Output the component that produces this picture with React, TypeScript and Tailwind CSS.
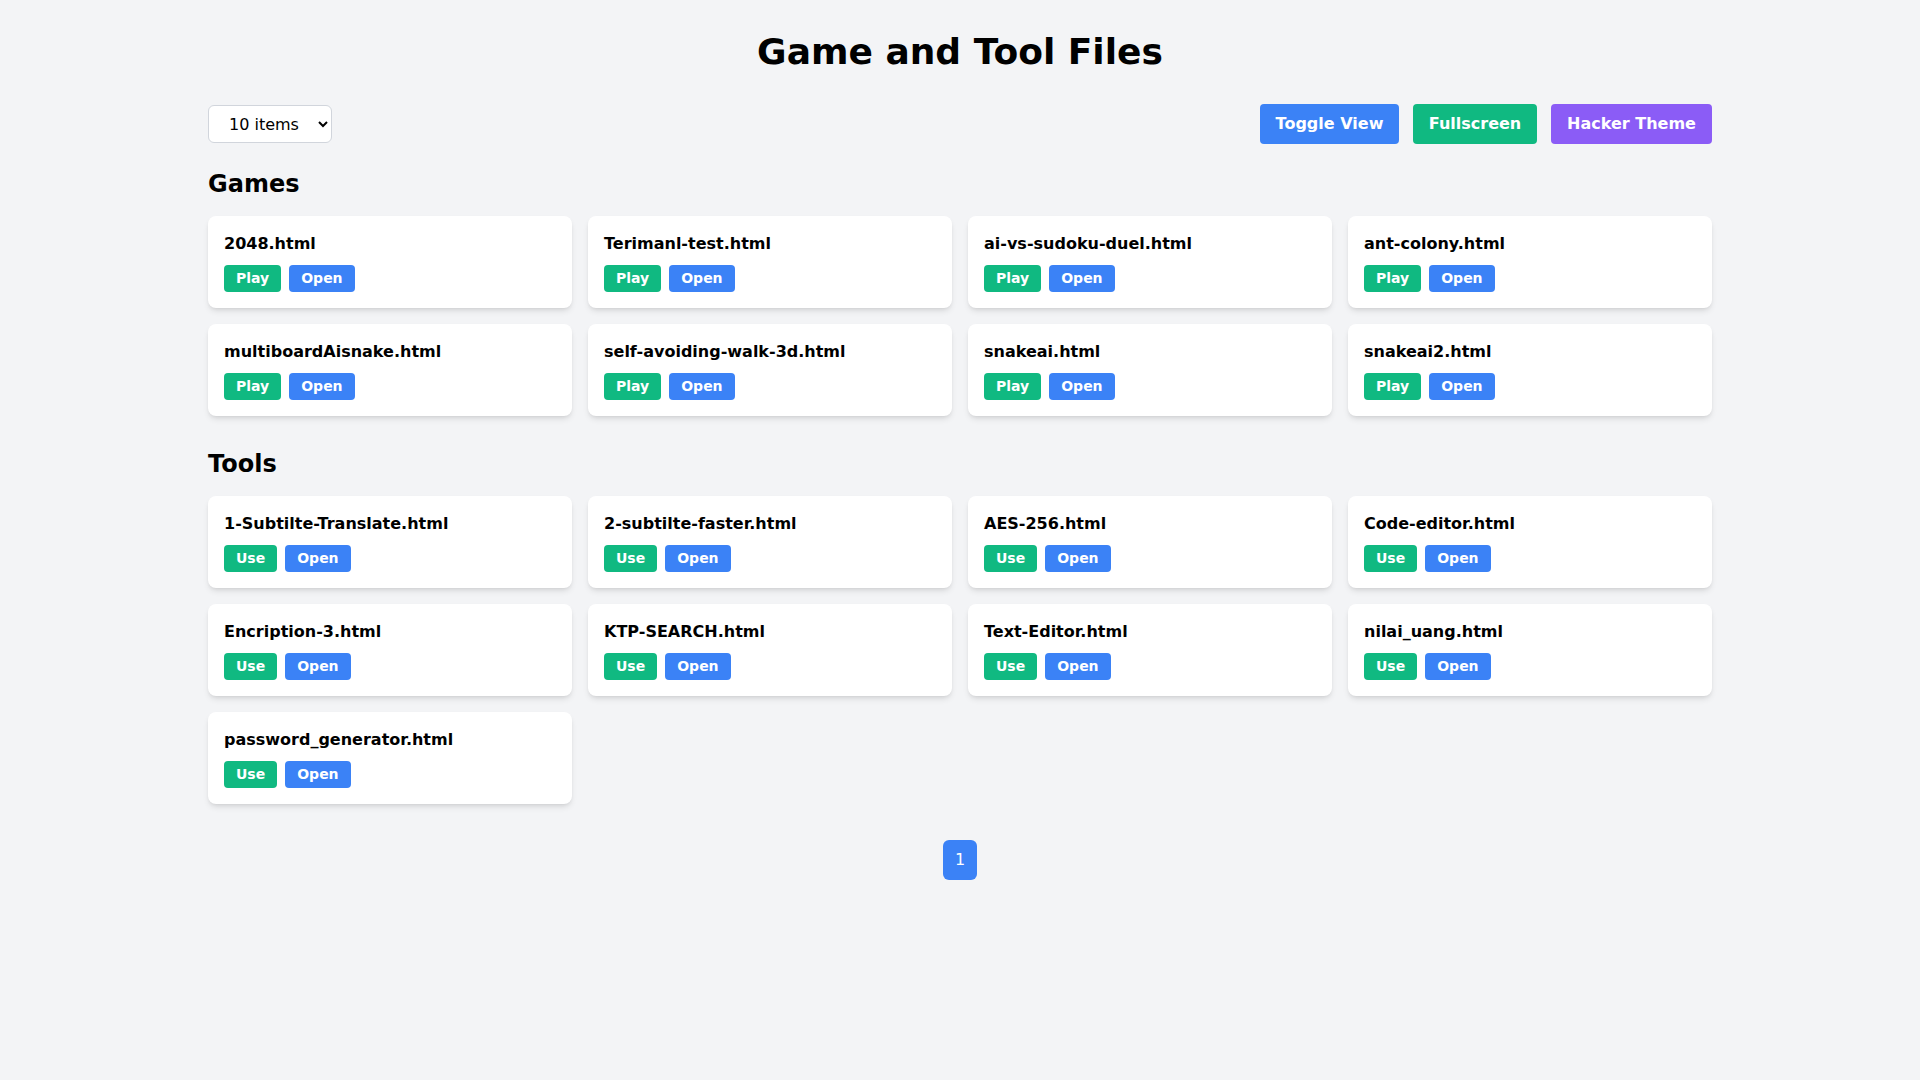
import { useState } from "react";

const games = [
  "2048.html",
  "Terimanl-test.html",
  "ai-vs-sudoku-duel.html",
  "ant-colony.html",
  "multiboardAisnake.html",
  "self-avoiding-walk-3d.html",
  "snakeai.html",
  "snakeai2.html",
];

const tools = [
  "1-Subtilte-Translate.html",
  "2-subtilte-faster.html",
  "AES-256.html",
  "Code-editor.html",
  "Encription-3.html",
  "KTP-SEARCH.html",
  "Text-Editor.html",
  "nilai_uang.html",
  "password_generator.html",
];

function FileCard({ name, action }: { name: string; action: string }) {
  return (
    <div className="rounded-lg bg-white p-4 shadow-md">
      <div className="mb-[9px] text-base leading-6 font-bold">{name}</div>
      <div className="flex gap-2">
        <button className="rounded bg-[#10b981] px-3 py-[5px] text-sm leading-[17px] font-bold text-white">
          {action}
        </button>
        <button className="rounded bg-[#3b82f6] px-3 py-[5px] text-sm leading-[17px] font-bold text-white">
          Open
        </button>
      </div>
    </div>
  );
}

function Section({ title, files, action }: { title: string; files: string[]; action: string }) {
  return (
    <section>
      <h2 className="mb-4 text-2xl leading-8 font-bold">{title}</h2>
      <div className="grid grid-cols-4 gap-4">
        {files.map((f) => (
          <FileCard key={f} name={f} action={action} />
        ))}
      </div>
    </section>
  );
}

export default function App() {
  const [perPage, setPerPage] = useState("10");

  return (
    <div className="min-h-screen bg-[#f3f4f6] font-['DejaVu_Sans',sans-serif] text-black">
      <div className="mx-auto max-w-[1536px] px-4 pt-[32px] pb-10">
        <h1 className="mb-[32px] text-center text-4xl leading-10 font-bold">Game and Tool Files</h1>

        <div className="mb-6 flex items-center justify-between">
          <select
            value={perPage}
            onChange={(e) => setPerPage(e.target.value)}
            className="h-[38px] w-[124px] rounded-md border border-gray-300 bg-white pr-2 pl-4 text-base"
          >
            <option value="10">10 items</option>
            <option value="20">20 items</option>
            <option value="50">50 items</option>
          </select>

          <div className="flex gap-[14px]">
            <button className="h-[40px] w-[139px] rounded bg-[#3b82f6] text-base font-bold text-white">
              Toggle View
            </button>
            <button className="h-[40px] w-[124px] rounded bg-[#10b981] text-base font-bold text-white">
              Fullscreen
            </button>
            <button className="h-[40px] w-[161px] rounded bg-[#8b5cf6] text-base font-bold text-white">
              Hacker Theme
            </button>
          </div>
        </div>

        <Section title="Games" files={games} action="Play" />
        <div className="mt-8">
          <Section title="Tools" files={tools} action="Use" />
        </div>

        <div className="mt-[36px] flex justify-center">
          <button className="rounded-md bg-[#3b82f6] px-3 py-2 text-base leading-6 text-white">1</button>
        </div>
      </div>
    </div>
  );
}
